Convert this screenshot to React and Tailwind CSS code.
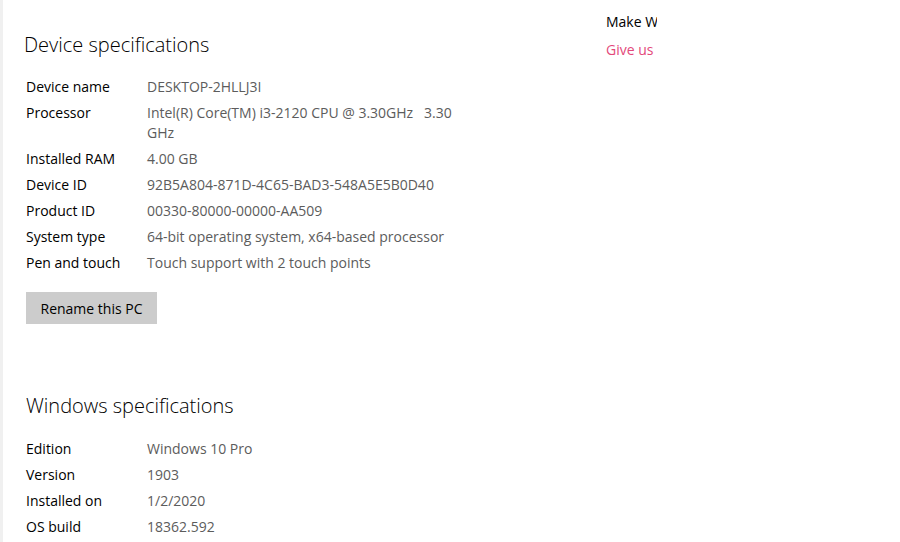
const deviceSpecs = [
  ["Device name", "DESKTOP-2HLLJ3I"],
  ["Processor", "Intel(R) Core(TM) i3-2120 CPU @ 3.30GHz\u00a0\u00a0 3.30 GHz"],
  ["Installed RAM", "4.00 GB"],
  ["Device ID", "92B5A804-871D-4C65-BAD3-548A5E5B0D40"],
  ["Product ID", "00330-80000-00000-AA509"],
  ["System type", "64-bit operating system, x64-based processor"],
  ["Pen and touch", "Touch support with 2 touch points"],
];

const windowsSpecs = [
  ["Edition", "Windows 10 Pro"],
  ["Version", "1903"],
  ["Installed on", "1/2/2020"],
  ["OS build", "18362.592"],
];

const SpecRows = ({ rows }) => (
  <div className="flex flex-col gap-[6px]">
    {rows.map(([label, value]) => (
      <div key={label} className="flex text-[14px] leading-[20px]">
        <div className="w-[121px] shrink-0 text-black">{label}</div>
        <div className="w-[322px] text-[#5c5c5c]">{value}</div>
      </div>
    ))}
  </div>
);

export default function App() {
  return (
    <div
      className="flex w-[900px] h-[542px] overflow-hidden bg-white border-l-[3px] border-[#f0f0f0]"
      style={{ fontFamily: '"Open Sans", "Noto Sans", sans-serif' }}
    >
      <div className="w-[603px] shrink-0 pl-[23px] pt-[31px]">
        <h2 className="text-[20px] leading-[28px] text-black -ml-[2px] font-light">
          Device specifications
        </h2>
        <div className="mt-[18px]">
          <SpecRows rows={deviceSpecs} />
        </div>
        <button className="mt-[19px] h-[32px] w-[131px] bg-[#cccccc] text-[14px] text-black">
          Rename this PC
        </button>
        <h2 className="mt-[68px] text-[20px] leading-[28px] text-black font-light">
          Windows specifications
        </h2>
        <div className="mt-[19px]">
          <SpecRows rows={windowsSpecs} />
        </div>
      </div>
      <div className="w-[51px] overflow-hidden pt-[12px] whitespace-nowrap">
        <div className="text-[14px] leading-[20px] text-black">Make W</div>
        <div className="mt-[8px] text-[14px] leading-[20px] text-[#e3487a]">Give us</div>
      </div>
    </div>
  );
}
